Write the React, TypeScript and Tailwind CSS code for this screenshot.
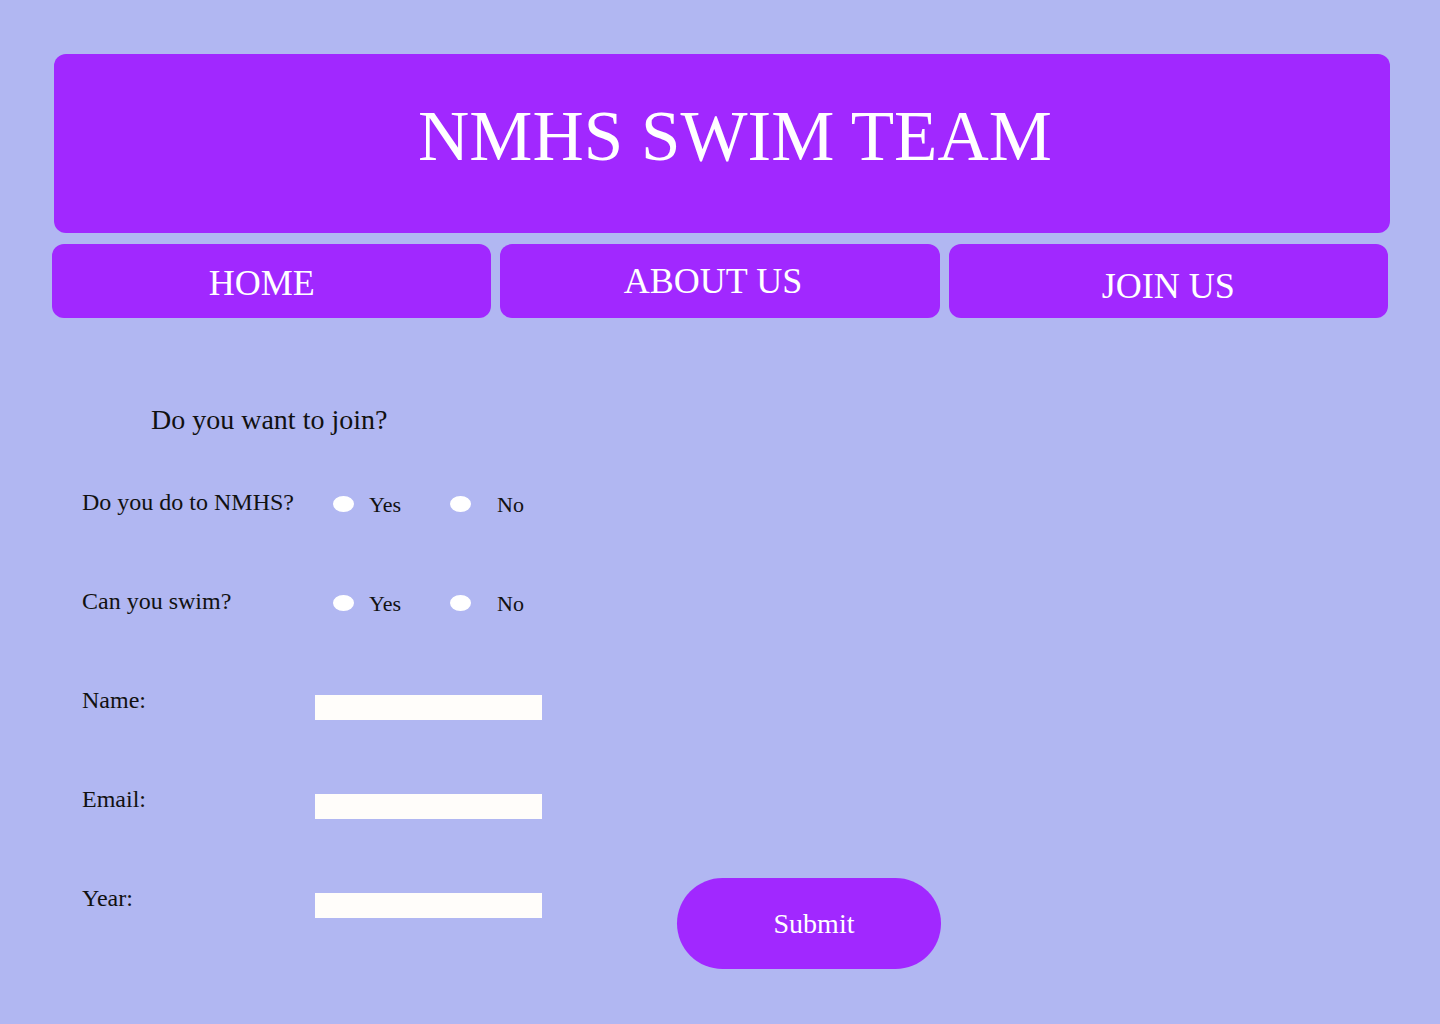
import React, { useState } from 'react';

const navItems = [
  { label: "HOME", cls: "pt-[21px] pr-[20px]" },
  { label: "ABOUT US", cls: "pt-[19px] pr-[14px]" },
  { label: "JOIN US", cls: "pt-[24px]" },
]

function Radio({ name, value, checked, onPick }) {
  return (
    <button
      type="button"
      aria-label={value}
      onClick={() => onPick(name, value)}
      className={"w-[21px] h-[16px] rounded-[50%] mt-[6px] " + (checked ? "bg-[#a128ff] ring-2 ring-white" : "bg-white")}
    />
  );
}

function RadioRow({ label, name, values, onPick }) {
  return (
    <div className="flex items-start h-[99px]">
      <div className="w-[233px] text-[24px] leading-none">{label}</div>
      <div className="flex items-start ml-[18px] w-[117px]">
        <Radio name={name} value="yes" checked={values[name] === "yes"} onPick={onPick} />
        <span className="ml-[15px] text-[22px] leading-none mt-[4px]">Yes</span>
      </div>
      <div className="flex items-start">
        <Radio name={name} value="no" checked={values[name] === "no"} onPick={onPick} />
        <span className="ml-[26px] text-[22px] leading-none mt-[4px]">No</span>
      </div>
    </div>
  );
}

export default function App() {
  const [values, setValues] = useState({ nmhs: "", swim: "", name: "", email: "", year: "" });

  const onPick = (name, value) => setValues((prev) => ({ ...prev, [name]: value }));
  const handleChange = ({ target }) => setValues((prev) => ({ ...prev, [target.name]: target.value }));

  return (
    <div className="min-h-screen bg-[#b1b7f2] pt-[54px] pb-[56px] font-['Liberation_Serif',serif] text-[#111]">
      <header className="ml-[54px] mr-[50px] h-[179px] rounded-[12px] bg-[#a128ff] flex justify-center items-start pt-[47px] pl-[26px]">
        <h1 className="text-white text-[71px] leading-none">NMHS SWIM TEAM</h1>
      </header>

      <nav className="mx-[52px] mt-[11px] grid grid-cols-3 gap-[9px]">
        {navItems.map((item) => (
          <a
            key={item.label}
            href="#"
            className={"h-[74px] rounded-[12px] bg-[#a128ff] text-white text-[36px] leading-none flex justify-center items-start " + item.cls}
          >
            {item.label}
          </a>
        ))}
      </nav>

      <form className="pl-[82px] mt-[88px]" onSubmit={(e) => e.preventDefault()}>
        <h2 className="ml-[69px] text-[28px] leading-none">Do you want to join?</h2>

        <div className="mt-[56px]">
          <RadioRow label="Do you do to NMHS?" name="nmhs" values={values} onPick={onPick} />
          <RadioRow label="Can you swim?" name="swim" values={values} onPick={onPick} />

          <div className="flex items-start h-[99px]">
            <label htmlFor="name" className="w-[233px] text-[24px] leading-none">Name:</label>
            <input id="name" name="name" value={values.name} onChange={handleChange} className="w-[227px] h-[25px] mt-[7px] bg-[#fffdfa] outline-none px-2 text-[16px]" />
          </div>

          <div className="flex items-start h-[99px]">
            <label htmlFor="email" className="w-[233px] text-[24px] leading-none">Email:</label>
            <input id="email" name="email" type="email" value={values.email} onChange={handleChange} className="w-[227px] h-[25px] mt-[7px] bg-[#fffdfa] outline-none px-2 text-[16px]" />
          </div>

          <div className="flex items-start">
            <label htmlFor="year" className="w-[233px] text-[24px] leading-none">Year:</label>
            <input id="year" name="year" value={values.year} onChange={handleChange} className="w-[227px] h-[25px] mt-[7px] bg-[#fffdfa] outline-none px-2 text-[16px]" />
            <button
              type="submit"
              className="ml-[135px] -mt-[8px] w-[264px] h-[91px] rounded-full bg-[#a128ff] text-white text-[28px] leading-none flex items-center justify-center pl-[10px]"
            >
              Submit
            </button>
          </div>
        </div>
      </form>
    </div>
  );
}
